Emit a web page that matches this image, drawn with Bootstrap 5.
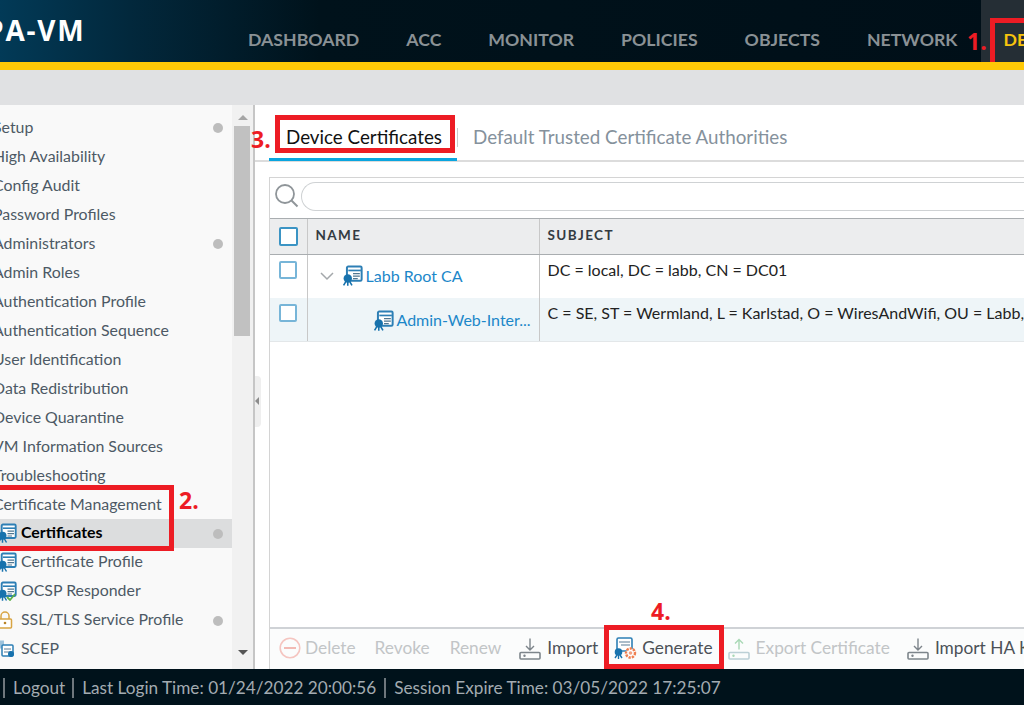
<!DOCTYPE html>
<html lang="en">
<head>
<meta charset="utf-8">
<title>PA-VM Certificates</title>
<link href="https://cdn.jsdelivr.net/npm/bootstrap@5.3.0/dist/css/bootstrap.min.css" rel="stylesheet">
<style>
html,body{height:705px;overflow:hidden}
body{font-family:Lato,"Liberation Sans",sans-serif;color:#4b5560;background:#fff;position:relative;width:1024px}
.pa-head{height:62px;background:linear-gradient(90deg,#023a57 0,#02283c 130px,#00121b 320px,#000f18 100%);overflow:hidden}
.pa-logo{font-family:"Open Sans",sans-serif;font-weight:700;font-size:28px;color:#fff;margin-left:-14px;width:262px;line-height:1;padding-top:16px;letter-spacing:1.8px;flex:none}
.pa-tab{font-size:17.7px;font-weight:700;color:#8a9195;line-height:22px;padding-top:29px;margin-right:47px;white-space:nowrap}
.pa-tab-on{background:#252e35;color:#f7c40d;padding:29px 30px 0 23px;margin-left:-24px;margin-right:0;height:62px}
.pa-stripe{height:8px;background:#ffc907}
.pa-sub{height:35px;background:#e0e1e3}
.pa-body{height:564px}
.pa-side{width:232px;flex:none;background:#f9f9f9;padding-top:8px;overflow:hidden}
.pa-row{height:29px;margin-left:-7px;font-size:15.9px;line-height:28px;color:#4d5965;white-space:nowrap;padding-right:9px}
.pa-sub-row{margin-left:0;padding-left:21px;position:relative;line-height:26px}
.pa-sub-row svg{position:absolute;left:-3px;top:4px}
.pa-on{background:#dcddde;color:#000;font-weight:700;margin-left:-7px;padding-left:28px}
.pa-on svg{left:4px}
.pa-dot{width:10px;height:10px;border-radius:50%;background:#bdbdbd;margin-top:10px;flex:none}
.pa-scroll{width:23px;flex:none;background:#f1f1f1;border-right:2px solid #c6c6c6;padding:0 2px}
.pa-up{border:solid transparent;border-width:0 5px 5px;border-bottom-color:#a5a5a5;width:0;margin:10px auto 6px}
.pa-dn{border:solid transparent;border-width:5px 5px 0;border-top-color:#555;width:0;margin:314px auto 0}
.pa-thumb{height:210px;background:#c1c1c1;width:16px}
.pa-handle{position:absolute;left:0;top:271px;width:6px;background:#efefef;height:51px;border-radius:0 4px 4px 0}
.pa-handle i{display:block;border:solid transparent;border-width:4px 4px 4px 0;border-right-color:#8c8c8c;width:0;margin-top:21px}
.pa-main{width:769px;flex:none;display:flex;flex-direction:column;position:relative}
.pa-tabs{height:57px;border-bottom:2px solid #dcdcdc;padding-left:14px}
.pa-t{font-size:18.8px;line-height:22px;padding:21px 16px 0 17px;height:56px;white-space:nowrap}
.pa-t-on{color:#111;border-bottom:3px solid #0aa5df;width:188px}
.pa-t-off{color:#85919c;padding-left:16px;position:relative}
.pa-t-off:before{content:"";position:absolute;left:0;top:23px;height:19px;width:1px;background:#c9c9c9}
.pa-grid{margin:15px 0 0 14px;width:755px;border-left:1px solid #d4d4d4;border-top:1px solid #d4d4d4;flex:1;display:flex;flex-direction:column;min-height:0}
.pa-search{height:40px;padding:4px 0 0 4px;gap:1px}
.pa-search svg{flex:none}
.pa-input{height:29px;flex:1;border:1px solid #cfd2d4;border-radius:15px 0 0 15px;border-right:0}
.pa-tbl{font-size:16px;width:755px;table-layout:fixed;margin:0;border-collapse:collapse}
.pa-tbl th{height:36px;background:#ecedee;border-top:1px solid #a9adb0;border-bottom:1px solid #a9adb0;font-size:13.5px;font-weight:700;letter-spacing:1.4px;color:#333b42;padding:0 7px 2px 8px;vertical-align:middle}
.pa-tbl td{padding:0 7px 0 8px;vertical-align:top;color:#222;border:0;box-shadow:none;background:transparent;white-space:nowrap;overflow:hidden}
.pa-tbl tr.pa-r1 td{height:43px}
.pa-tbl tr.pa-r2 td{height:44px;background:#eef5f8;border-bottom:1px solid #e3e7e9}
.pa-tbl th + th,.pa-tbl td + td{border-left:1px solid #c8c8c8}
.pa-chk{width:18px;height:18px;border:2px solid #77b5d8;border-radius:2px;background:#fff;display:block;margin:6px 0 0 9px}
.pa-chk-h{width:19px;height:19px;border-color:#3b94c4;margin:0 0 0 1px}
.pa-link{color:#1c87c9;font-size:16px}
.pa-subj{padding-top:4px!important;line-height:21px}
.pa-name1{line-height:20px;padding-top:10px!important}
.pa-name2{line-height:20px;padding-top:12px!important}
.pa-tools{margin-top:auto;height:42px;background:#fbfcfc;border-top:2px solid #cfd2d6;padding-left:9px;font-size:17.3px;white-space:nowrap}
.pa-tool{display:inline-flex;flex:none;align-items:center;gap:4px;color:#4b5157;height:38px}
.pa-tool svg{flex:none}
.pa-tool.off{color:#c2c5c7}
.pa-foot{height:36px;background:#00121b;color:#a3abb1;font-size:17.2px;line-height:38px;padding-left:3px;white-space:nowrap;position:relative;z-index:1}
.pa-bar{display:inline-block;width:2px;height:20px;background:#6e777d;vertical-align:-4px;margin:0 8px}
.pa-bar-a{margin-left:7px}
.pa-box{position:absolute;border:5px solid #ed1c24;z-index:2;pointer-events:none}
.pa-num{position:absolute;font-family:"Open Sans",sans-serif;font-weight:700;font-size:23px;line-height:24px;color:#ed1c24;z-index:3}
</style>
</head>
<body>
<svg width="0" height="0" class="position-absolute">
<defs>
<symbol id="cert" viewBox="0 0 20 20"><rect x="4.700" y="1.500" width="14" height="13.500" rx="1.200" fill="#fff" stroke="#2d7fb5" stroke-width="1.900"/><path d="M6 5.200h12" stroke="#2d7fb5" stroke-width="1.600"/><path d="M10.500 8.200h6.500M10.500 10.700h6.500M10.500 13h4.500" stroke="#4f7690" stroke-width="1.200"/><circle cx="5.500" cy="12.800" r="4" fill="#1772ad"/><path d="M1.500 19.500l2-3.500M5.500 19.800v-4M9.500 19.500l-2-3.500" stroke="#1772ad" stroke-width="1.500"/></symbol>
<symbol id="tray" viewBox="0 0 22 22"><path d="M11 1v11M7 8.500l4 4 4-4" fill="none" stroke="currentColor" stroke-width="1.400"/><rect x="1" y="15" width="20" height="6.500" rx="1" fill="none" stroke="currentColor" stroke-width="1.600"/><circle cx="5.500" cy="18.200" r="1.200" fill="currentColor"/></symbol>
<symbol id="export" viewBox="0 0 22 22"><path d="M11 12V2M7 6l4-4 4 4" fill="none" stroke="#a8d8b5" stroke-width="1.400"/><rect x="1" y="15" width="20" height="6.500" rx="1" fill="none" stroke="#bcd0d6" stroke-width="1.600"/><circle cx="5.500" cy="18.200" r="1.200" fill="#a8d8b5"/></symbol>
<symbol id="gen" viewBox="0 0 24 24"><rect x="4" y="2" width="15" height="13" rx="1.500" fill="#fff" stroke="#2d7fb5" stroke-width="1.600"/><path d="M6 6h11M8 9h9" stroke="#5a7d96" stroke-width="1.200"/><circle cx="5.500" cy="16" r="3.800" fill="#1772ad"/><path d="M2 22l2-3M5.500 23v-4M9 22l-2-3" stroke="#1772ad" stroke-width="1.400"/><circle cx="17.500" cy="17" r="4.500" fill="#fff" stroke="#ef7f4f" stroke-width="2.400" stroke-dasharray="2.300 1"/><circle cx="17.500" cy="17" r="1.800" fill="#f2a183"/></symbol>
</defs>
</svg>

<header class="pa-head d-flex">
  <div class="pa-logo">PA-VM</div>
  <nav class="d-flex">
    <div class="pa-tab">DASHBOARD</div>
    <div class="pa-tab">ACC</div>
    <div class="pa-tab">MONITOR</div>
    <div class="pa-tab">POLICIES</div>
    <div class="pa-tab">OBJECTS</div>
    <div class="pa-tab">NETWORK</div>
    <div class="pa-tab pa-tab-on">DEVICE</div>
  </nav>
</header>
<div class="pa-stripe"></div>
<div class="pa-sub"></div>

<div class="pa-body d-flex">
  <aside class="pa-side">
    <div class="pa-row d-flex justify-content-between"><span>Setup</span><span class="pa-dot"></span></div>
    <div class="pa-row">High Availability</div>
    <div class="pa-row">Config Audit</div>
    <div class="pa-row">Password Profiles</div>
    <div class="pa-row d-flex justify-content-between"><span>Administrators</span><span class="pa-dot"></span></div>
    <div class="pa-row">Admin Roles</div>
    <div class="pa-row">Authentication Profile</div>
    <div class="pa-row">Authentication Sequence</div>
    <div class="pa-row">User Identification</div>
    <div class="pa-row">Data Redistribution</div>
    <div class="pa-row">Device Quarantine</div>
    <div class="pa-row">VM Information Sources</div>
    <div class="pa-row">Troubleshooting</div>
    <div class="pa-row">Certificate Management</div>
    <div class="pa-row pa-sub-row pa-on d-flex justify-content-between"><svg width="20" height="20"><use href="#cert"/></svg><span>Certificates</span><span class="pa-dot"></span></div>
    <div class="pa-row pa-sub-row"><svg width="20" height="20"><use href="#cert"/></svg>Certificate Profile</div>
    <div class="pa-row pa-sub-row"><svg width="20" height="20" viewBox="0 0 20 20"><use href="#cert"/><path d="M10 16l3 3 5-6" fill="none" stroke="#5fb04a" stroke-width="1.800"/></svg>OCSP Responder</div>
    <div class="pa-row pa-sub-row d-flex justify-content-between"><svg width="20" height="20" viewBox="0 0 20 20"><path d="M4 9V6a4 4 0 018 0v3" fill="none" stroke="#d8a544" stroke-width="1.500"/><rect x="1.500" y="9" width="13" height="9" rx="1" fill="#fff" stroke="#d8a544" stroke-width="1.500"/><circle cx="8" cy="13" r="1.300" fill="#b9842a"/></svg><span>SSL/TLS Service Profile</span><span class="pa-dot"></span></div>
    <div class="pa-row pa-sub-row"><svg width="20" height="20" viewBox="0 0 20 20"><rect x="2" y="1.500" width="5" height="8" fill="#9ec3dc"/><rect x="5" y="6" width="11" height="11" rx="1" fill="#fff" stroke="#2d7fb5" stroke-width="1.500"/><path d="M7 10h7M7 13h7" stroke="#5a7d96"/><circle cx="14" cy="15" r="3" fill="#1772ad"/></svg>SCEP</div>
  </aside>
  <div class="pa-scroll d-flex flex-column">
    <div class="pa-up"></div>
    <div class="pa-thumb"></div>
    <div class="pa-dn"></div>
  </div>
  <div class="pa-main">
    <div class="pa-handle"><i></i></div>
    <div class="pa-tabs d-flex">
      <div class="pa-t pa-t-on">Device Certificates</div>
      <div class="pa-t pa-t-off">Default Trusted Certificate Authorities</div>
    </div>
    <div class="pa-grid">
      <div class="pa-search d-flex">
        <svg width="26" height="27" viewBox="0 0 26 27"><circle cx="11" cy="12" r="9" fill="none" stroke="#8f9599" stroke-width="1.800"/><path d="M17.500 18.500l6 6" stroke="#8f9599" stroke-width="2"/></svg>
        <div class="pa-input"></div>
      </div>
      <table class="table pa-tbl">
        <colgroup><col style="width:37px"><col style="width:232px"><col></colgroup>
        <thead><tr>
          <th class="p-0 ps-2"><span class="pa-chk pa-chk-h"></span></th>
          <th>NAME</th>
          <th>SUBJECT</th>
        </tr></thead>
        <tbody>
          <tr class="pa-r1">
            <td class="p-0"><span class="pa-chk"></span></td>
            <td class="pa-name1"><span class="d-flex align-items-center" style="gap:4px"><svg class="ms-1 me-1 flex-shrink-0" width="14" height="10" viewBox="0 0 14 10"><path d="M1 2l6 6 6-6" fill="none" stroke="#a4a8ab" stroke-width="1.500"/></svg><svg class="flex-shrink-0" width="21" height="21"><use href="#cert"/></svg><span class="pa-link" style="margin-left:-1px">Labb Root CA</span></span></td>
            <td class="pa-subj">DC = local, DC = labb, CN = DC01</td>
          </tr>
          <tr class="pa-r2">
            <td class="p-0"><span class="pa-chk"></span></td>
            <td class="pa-name2"><span class="d-flex align-items-center" style="padding-left:57px;gap:3px"><svg class="flex-shrink-0" width="21" height="21"><use href="#cert"/></svg><span class="pa-link">Admin-Web-Inter...</span></span></td>
            <td class="pa-subj">C = SE, ST = Wermland, L = Karlstad, O = WiresAndWifi, OU = Labb, CN = admin.labb.local</td>
          </tr>
        </tbody>
      </table>
      <div class="pa-tools d-flex">
        <span class="pa-tool off"><svg width="22" height="22" viewBox="0 0 22 22"><circle cx="11" cy="11" r="9.800" fill="none" stroke="#f5c5c0" stroke-width="1.600"/><path d="M5 11h12" stroke="#f0a9a2" stroke-width="1.600"/></svg>Delete</span>
        <span class="pa-tool off" style="margin-left:19px">Revoke</span>
        <span class="pa-tool off" style="margin-left:20px">Renew</span>
        <span class="pa-tool" style="margin-left:18px;gap:6px"><svg width="22" height="23" style="color:#7d858b"><use href="#tray"/></svg>Import</span>
        <span class="pa-tool" style="margin-left:15px;gap:5px"><svg width="24" height="24"><use href="#gen"/></svg>Generate</span>
        <span class="pa-tool off" style="margin-left:15px;gap:6px"><svg width="22" height="23"><use href="#export"/></svg>Export Certificate</span>
        <span class="pa-tool" style="margin-left:17px;gap:6px"><svg width="22" height="23" style="color:#7d858b"><use href="#tray"/></svg>Import HA Key</span>
      </div>
    </div>
  </div>
</div>

<footer class="pa-foot"><span class="pa-bar ms-0"></span>Logout<span class="pa-bar pa-bar-a"></span>Last Login Time: 01/24/2022 20:00:56<span class="pa-bar"></span>Session Expire Time: 03/05/2022 17:25:07</footer>

<div class="pa-box" style="left:990px;top:18px;width:60px;height:44px;border-bottom-width:0"></div>
<div class="pa-box" style="left:-10px;top:485px;width:184px;height:66px"></div>
<div class="pa-box" style="left:275px;top:115px;width:180px;height:38px"></div>
<div class="pa-box" style="left:604px;top:625px;width:120px;height:44px"></div>
<div class="pa-num" style="left:967px;top:29px">1.</div>
<div class="pa-num" style="left:179px;top:488px">2.</div>
<div class="pa-num" style="left:251px;top:127px">3.</div>
<div class="pa-num" style="left:651px;top:599px">4.</div>
</body>
</html>
